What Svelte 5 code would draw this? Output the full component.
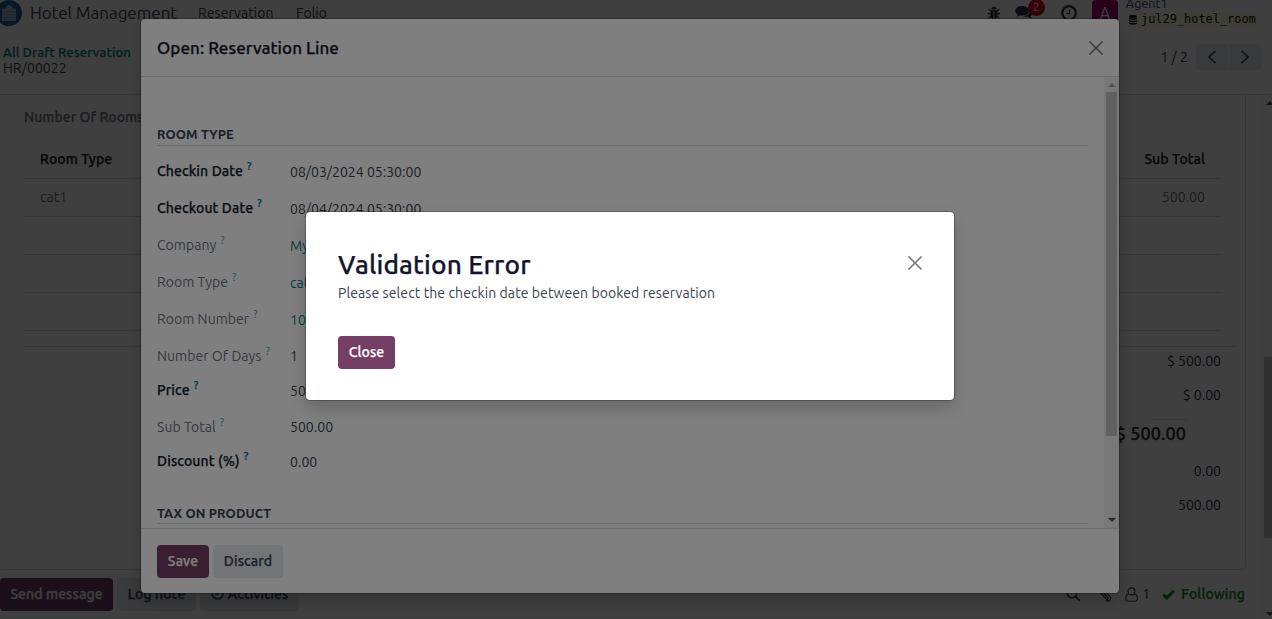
<script>
  const rows = [
    { label: 'Checkin Date', value: '08/03/2024 05:30:00', required: true, h: 37, low: true },
    { label: 'Checkout Date', value: '08/04/2024 05:30:00', required: true, h: 37, low: true },
    { label: 'Company', value: 'My Company', link: true, h: 37, low: true },
    { label: 'Room Type', value: 'cat1', link: true, h: 37, low: true },
    { label: 'Room Number', value: '101', link: true, h: 37, low: true },
    { label: 'Number Of Days', value: '1', h: 34 },
    { label: 'Price', value: '500.00', required: true, h: 37, low: true },
    { label: 'Sub Total', value: '500.00', h: 34 },
    { label: 'Discount (%)', value: '0.00', required: true, h: 34, low: true }
  ];
</script>

<div class="page">
  <nav>
    <svg class="logo" width="26" height="26" viewBox="0 0 26 26">
      <circle cx="13" cy="13" r="13" fill="#1d5f9f" />
      <path d="M6 8.500h4V6.500h1.500V5h3v1.500H16v2h4V21H6z" fill="#9fbdd6" />
      <path d="M6 11.500h14M6 14.500h14M6 17.500h14" stroke="#6d9ac0" stroke-width="1" />
    </svg>
    <span class="brand">Hotel Management</span>
    <span class="menu first">Reservation</span>
    <span class="menu">Folio</span>
    <div class="systray">
      <svg class="bug" width="14" height="14" viewBox="0 0 14 14">
        <path d="M4.300 3.400a2.700 2.700 0 0 1 5.400 0zM3.400 4.200h7.200v5.300c0 2-1.400 3.300-3.200 3.300V5.600h-.8v7.200c-1.800 0-3.200-1.300-3.200-3.300z" fill="#283041" />
        <path d="M1.600 3l2.200 2.200M12.400 3l-2.200 2.200M.8 7.600h2.800M13.200 7.600h-2.800M1.900 12.100l2-2M12.100 12.100l-2-2" stroke="#283041" stroke-width="1.200" />
      </svg>
      <div class="chat">
        <svg width="18" height="15" viewBox="0 0 18 15">
          <path d="M7.200 1C3.400 1 .3 3.100.3 5.800c0 1.600 1 2.900 2.600 3.800-.2.800-.7 1.400-1.200 2 1.500-.1 2.700-.7 3.600-1.300 4.900.7 8.800-1.400 8.800-4.500C14.100 3.100 11 1 7.200 1z" fill="#283041" />
          <path d="M15.300 4c1.600.8 2.500 2 2.500 3.500s-.9 2.800-2.400 3.600c.2.800.7 1.300 1.200 1.900-1.500-.1-2.800-.7-3.700-1.300-1.900.3-3.900 0-5.300-.7 4.700 0 8.300-2.800 7.700-7z" fill="#283041" />
        </svg>
        <b>2</b>
      </div>
      <svg class="clock" width="16" height="16" viewBox="0 0 16 16" fill="none" stroke="#283041">
        <circle cx="8" cy="8" r="6.800" stroke-width="2.200" /><path d="M8.500 4.200v4.500H5.300" stroke-width="1.300" />
      </svg>
      <div class="avatar">A</div>
      <div class="user">
        <span>Agent1</span>
        <span class="db">
          <svg width="8" height="10" viewBox="0 0 8 10" fill="#111"><ellipse cx="4" cy="1.400" rx="4" ry="1.400" /><path d="M0 2.500q4 1.500 8 0v1.600q-4 1.500-8 0zM0 5q4 1.500 8 0v1.600q-4 1.500-8 0zM0 7.500q4 1.500 8 0v1.300q-4 2-8 0z" /></svg>
          jul29_hotel_room
        </span>
      </div>
    </div>
  </nav>

  <header>
    <div class="crumbs"><a>All Draft Reservation</a><span>HR/00022</span></div>
    <div class="pager">
      <span>1 / 2</span>
      <button><svg width="10" height="14" viewBox="0 0 10 14"><path d="M8.500 .8L2 7l6.500 6.200" /></svg></button>
      <button><svg width="10" height="14" viewBox="0 0 10 14"><path d="M1.500 .8L8 7l-6.500 6.200" /></svg></button>
    </div>
  </header>

  <main>
    <div class="content">
      <section class="sheet">
        <div class="tab">Number Of Rooms</div>
        <div class="table">
          <div class="tr th"><span>Room Type</span><span>Sub Total</span></div>
          <div class="tr"><span>cat1</span><span>500.00</span></div>
          <div class="tr"></div>
          <div class="tr"></div>
          <div class="tr"></div>
        </div>
        <div class="totals">
          <span>$ 500.00</span>
          <span>$ 0.00</span>
          <div class="grand"><i></i><strong>$ 500.00</strong></div>
          <span>0.00</span>
          <span>500.00</span>
        </div>
      </section>
      <div class="chatter">
        <button class="primary">Send message</button>
        <button>Log note</button>
        <button class="act"><svg width="13" height="13" viewBox="0 0 13 13" fill="none" stroke="#374151"><circle cx="6.500" cy="6.500" r="5.500" stroke-width="1.600" /><path d="M6.900 3.500v3.700H4.200" stroke-width="1.200" /></svg>Activities</button>
        <div class="right">
          <svg class="search" width="15" height="15" viewBox="0 0 15 15" fill="none" stroke="#374151"><circle cx="6" cy="6" r="4.700" stroke-width="1.600" /><path d="M9.500 9.500l4.300 4.300" stroke-width="1.900" /></svg>
          <svg class="clip" width="14" height="15" viewBox="0 0 14 15" fill="none" stroke="#374151" stroke-width="1.200"><path d="M4.500 5l5.300 5.600c1 1.100-.4 2.400-1.400 1.400L2 5.300C-.1 3 2.800.1 5 2.300l6.800 7.100c2.300 2.800-1.200 6.200-3.900 3.600" /></svg>
          <svg class="person" width="13" height="15" viewBox="0 0 13 15" fill="none" stroke="#374151" stroke-width="1.100"><path d="M3.600 7C1.400 7.300.7 9.200.7 11.600c0 1.600.8 2.600 2.100 2.600h7.400c1.300 0 2.100-1 2.100-2.600 0-2.400-.7-4.300-2.900-4.600" /><circle cx="6.500" cy="4.400" r="3.500" /></svg>
          <span>1</span>
          <svg class="check" width="13" height="11" viewBox="0 0 13 11"><path d="M1.200 5.300l3.600 3.700L11.800 1.800" fill="none" stroke="#008818" stroke-width="3" /></svg>
          <b>Following</b>
        </div>
      </div>
    </div>
    <div class="scroll outer"><i class="up"></i><div class="thumb"></div><i class="down"></i></div>
  </main>
</div>

<div class="backdrop"></div>

<div class="dialog form">
  <div class="head">
    <h4>Open: Reservation Line</h4>
    <svg class="x" width="16" height="16" viewBox="0 0 16 16"><path d="M1.500 1.500l13 13M14.500 1.500l-13 13" /></svg>
  </div>
  <div class="body">
    <div class="fields">
      <h5>ROOM TYPE</h5>
      <div class="rows">
        {#each rows as r}
          <div class="row" style="height:{r.h}px">
            <label class:required={r.required}>{r.label}<sup>?</sup></label>
            <span class:link={r.link} class:low={r.low}>{r.value}</span>
          </div>
        {/each}
      </div>
      <h5 class="last">TAX ON PRODUCT</h5>
    </div>
    <div class="scroll inner"><i class="up"></i><div class="thumb"></div><i class="down"></i></div>
  </div>
  <div class="foot">
    <button class="primary">Save</button>
    <button>Discard</button>
  </div>
</div>

<div class="backdrop"></div>

<div class="dialog error">
  <div class="title">
    <h2>Validation Error</h2>
    <svg class="x" width="16" height="16" viewBox="0 0 16 16"><path d="M1.500 1.500l13 13M14.500 1.500l-13 13" /></svg>
  </div>
  <p>Please select the checkin date between booked reservation</p>
  <button class="primary">Close</button>
</div>

<style>
  :global(body) { overflow: hidden; }
  :global(#app) { font-family: Ubuntu, "Noto Sans", sans-serif; font-size: 14px; line-height: 20px; letter-spacing: .05px; color: #374151; }
  div, section, button, span, main, header, nav { box-sizing: border-box; }
  h2, h4, h5, p { margin: 0; }
  button {
    height: 33px; padding: 0; border: 0; border-radius: 4px; background: #e7e9ed;
    color: #374151; font: 500 14px/31px Ubuntu, "Noto Sans", sans-serif; letter-spacing: .1px; white-space: nowrap; text-align: center;
  }
  button, h4, h2, .crumbs a, .tab, .tr.th, .grand strong, .right b, label.required { -webkit-text-stroke: .25px; }
  button.primary { background: #743e65; color: #fff; }

  .page { display: flex; flex-direction: column; width: 1272px; height: 619px; overflow: hidden; background: #fff; }
  nav { display: flex; align-items: center; height: 26px; flex: none; white-space: nowrap; }
  .logo { width: 26px; flex: none; margin-left: -4px; margin-right: 8px; }
  .brand { width: 168px; font-size: 17px; letter-spacing: -.05px; }
  .menu.first { width: 98px; }
  .systray { display: flex; align-items: flex-start; height: 26px; margin-left: auto; }
  .bug { margin: 6px 14px 0 0; }
  .chat { position: relative; width: 46px; padding-top: 5px; }
  .chat b {
    position: absolute; left: 13px; top: -1px; width: 17px; height: 17px; border-radius: 9px;
    background: #d8002c; color: #fff; font: 400 11px/17px Ubuntu, "Noto Sans", sans-serif; text-align: center;
  }
  .clock { margin: 5px 15px 0 0; }
  .avatar { width: 26px; height: 26px; margin-right: 8px; border-radius: 4px; background: #a3006b; color: #fff; font-size: 16px; line-height: 26px; text-align: center; }
  .user { display: flex; flex-direction: column; width: 146px; font-size: 12.500px; line-height: 14px; margin-top: -3px; }
  .user > span:first-child { height: 15px; line-height: 13px; }
  .db { display: flex; align-items: center; gap: 4px; width: 131px; height: 15px; padding-left: 3px; border-radius: 3px; background: #fffbe0; color: #111; font: 12px/15px "DejaVu Sans Mono", monospace; letter-spacing: -.05px; }

  header { display: flex; justify-content: space-between; height: 69px; flex: none; padding: 16px 11px 0 3px; border-bottom: 1px solid #d8dadd; }
  .crumbs { display: flex; flex-direction: column; line-height: 16px; padding-top: 2px; }
  .crumbs a { color: #017e84; font-weight: 500; font-size: 13px; letter-spacing: .13px; }
  .pager { display: flex; gap: 1px; padding-top: 2px; }
  .pager span { margin: 3px 7px 0 0; }
  .pager button { width: 32px; height: 26px; padding: 2px 0 0; line-height: 1; border-radius: 4px 0 0 4px; }
  .pager button:last-child { border-radius: 0 4px 4px 0; }
  .pager path { fill: none; stroke: #374151; stroke-width: 1.600; }

  main { display: flex; flex: 1; min-height: 0; }
  .content { width: 1262px; }
  .sheet { width: 1246px; height: 475px; padding: 12px 9px 0 24px; border: solid #d8dadd; border-width: 0 1px 1px 0; border-radius: 0 0 4px 4px; }
  .tab { font-weight: 500; color: #6b7280; }
  .table { width: 1197px; margin-top: 13px; }
  .tr { display: flex; justify-content: space-between; height: 38px; padding: 8px 16px 0; border-bottom: 1px solid #d8dadd; color: #6b7280; }
  .tr.th { height: 39px; padding-top: 9px; font-weight: 500; color: #111827; letter-spacing: .1px; }
  .totals { display: flex; flex-direction: column; align-items: flex-end; margin-top: 15px; padding: 4px 15px 0 0; border-top: 1px solid #d8dadd; color: #1f2937; }
  .totals > span { height: 34px; line-height: 20px; font-weight: 450; letter-spacing: 0; }
  .grand { display: flex; flex-direction: column; align-items: flex-end; height: 42px; padding-right: 35px; }
  .grand i { width: 35px; height: 1px; margin-bottom: 3px; background: #d8dadd; }
  .grand strong { font-size: 18px; font-weight: 500; letter-spacing: .1px; }

  .chatter { display: flex; gap: 4px; padding-top: 8px; }
  .chatter .primary { width: 113px; }
  .chatter button:nth-child(2) { width: 79px; }
  .chatter .act { display: flex; align-items: center; justify-content: center; gap: 4px; width: 99px; line-height: 20px; padding-bottom: 2px; }
  .right { display: flex; align-items: center; margin-left: auto; margin-right: 17px; height: 32px; }
  .search { margin-right: 17px; }
  .clip { margin-right: 13px; }
  .person { margin-right: 4px; }
  .right span { width: 20px; }
  .check { margin-right: 6px; }
  .right b { font-weight: 500; letter-spacing: .12px; color: #008818; }

  .scroll { display: flex; flex-direction: column; align-items: center; background: #f1f1f1; }
  .scroll i { width: 0; height: 0; border: 4px solid transparent; }
  .scroll .up { border-top: 0; border-bottom-color: #505050; }
  .scroll .down { border-bottom: 0; border-top-color: #505050; margin-top: auto; }
  .scroll .thumb { background: #c1c1c1; }
  .outer { width: 15px; margin-right: -5px; padding: 6px 0 3px; background: #fafafa; }
  .outer .thumb { width: 11px; height: 181px; margin-top: 252px; }
  .inner { width: 15px; padding: 6px 0; }
  .inner .up { border-bottom-color: #a3a3a3; }
  .inner .thumb { width: 11px; height: 344px; margin-top: 5px; }

  .backdrop { position: absolute; inset: 0; height: 619px; background: rgba(0, 0, 0, .5); }
  .dialog { position: absolute; display: flex; flex-direction: column; background: #fff; border-radius: 4px; box-shadow: 0 0 0 1px rgba(0, 0, 0, .25), 0 8px 16px rgba(0, 0, 0, .18); }
  .x path { stroke: #7b7b7b; stroke-width: 1.700; }

  .form { left: 141px; top: 19px; width: 978px; height: 574px; }
  .head { display: flex; justify-content: space-between; align-items: center; height: 58px; padding: 0 15px 0 16px; border-bottom: 1px solid #d8dadd; }
  .head h4 { font-size: 17px; font-weight: 500; letter-spacing: .05px; color: #14142b; }
  .body { display: flex; justify-content: space-between; height: 451px; overflow: hidden; }
  .fields { width: 963px; padding: 47px 16px 0; }
  h5 { height: 22px; box-sizing: border-box; font-size: 13px; line-height: 20px; font-weight: 700; letter-spacing: .1px; border-bottom: 1px solid #d8dadd; }
  h5.last { height: 21px; }
  .rows { height: 357px; padding-top: 15px; }
  .row { display: flex; align-items: flex-start; }
  label { width: 133px; color: #6b7280; white-space: nowrap; }
  label.required { font-weight: 500; letter-spacing: .12px; color: #111827; }
  sup { margin-left: 4px; font-size: 11px; line-height: 0; vertical-align: 6px; color: #4f9db8; font-weight: 400; }
  .required sup { color: #01709a; font-weight: 500; }
  .low { padding-top: 1px; }
  .row span { letter-spacing: .02px; }
  .link { color: #017e84; }
  .foot { display: flex; gap: 4px; height: 65px; padding: 16px; border-top: 1px solid #d8dadd; }
  .foot .primary { width: 52px; }
  .foot button:last-child { width: 70px; }

  .error { left: 306px; top: 212px; width: 648px; height: 188px; padding: 36px 31px 0 32px; }
  .title { display: flex; justify-content: space-between; height: 32px; }
  h2 { font-size: 26.300px; line-height: 32px; font-weight: 500; letter-spacing: .15px; color: #14142b; }
  .title .x { margin-top: 7px; }
  p { margin-top: 3px; letter-spacing: .09px; }
  .error .primary { width: 57px; margin-top: 33px; }
</style>
